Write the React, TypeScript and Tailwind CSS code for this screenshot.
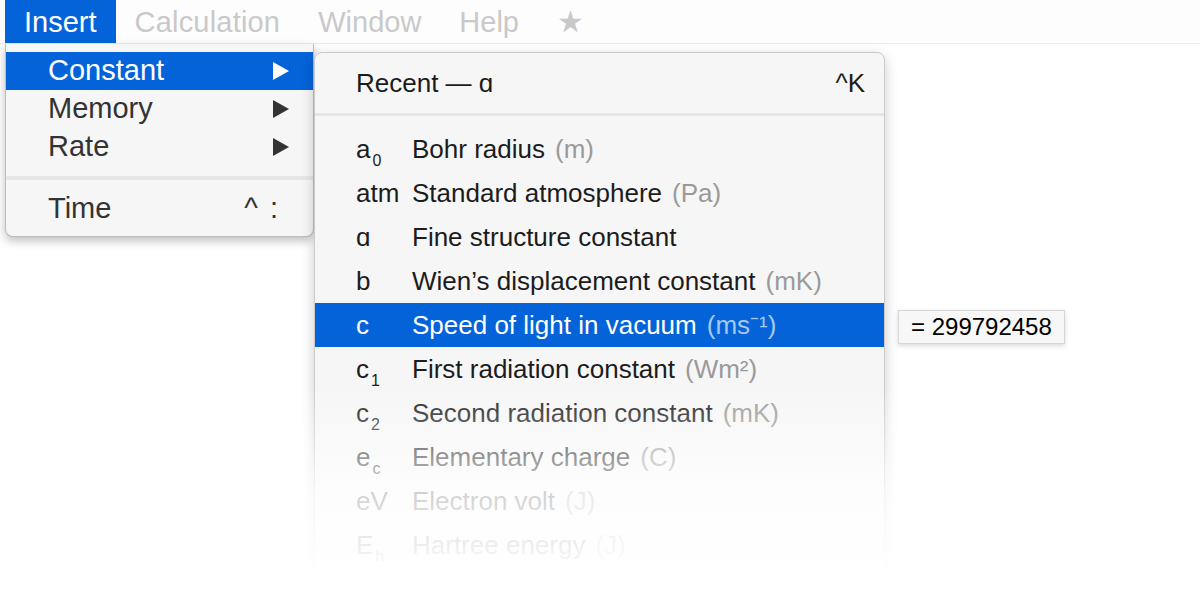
import React from "react";

type Row = {
  sym: React.ReactNode;
  name: string;
  unit?: string;
  active?: boolean;
};

const rows: Row[] = [
  { sym: <>a<sub className="text-[16px] ml-[2px] align-[-4px]">0</sub></>, name: "Bohr radius", unit: "(m)" },
  { sym: "atm", name: "Standard atmosphere", unit: "(Pa)" },
  { sym: "ɑ", name: "Fine structure constant" },
  { sym: "b", name: "Wien’s displacement constant", unit: "(mK)" },
  { sym: "c", name: "Speed of light in vacuum", unit: "(ms⁻¹)", active: true },
  { sym: <>c<sub className="text-[16px] ml-[2px] align-[-4px]">1</sub></>, name: "First radiation constant", unit: "(Wm²)" },
  { sym: <>c<sub className="text-[16px] ml-[2px] align-[-4px]">2</sub></>, name: "Second radiation constant", unit: "(mK)" },
  { sym: <>e<sub className="text-[16px] ml-[2px] align-[-4px]">c</sub></>, name: "Elementary charge", unit: "(C)" },
  { sym: "eV", name: "Electron volt", unit: "(J)" },
  { sym: <>E<sub className="text-[16px] ml-[2px] align-[-4px]">h</sub></>, name: "Hartree energy", unit: "(J)" },
];

function Arrow({ white }: { white?: boolean }) {
  return (
    <svg width="18" height="20" viewBox="0 0 18 20">
      <polygon points="1,1 17,10 1,19" fill={white ? "#ffffff" : "#333333"} />
    </svg>
  );
}

export default function App() {
  return (
    <div
      className="relative w-[1200px] h-[600px] overflow-hidden bg-white"
      style={{ fontFamily: '"Liberation Sans", Arial, sans-serif' }}
    >
      {/* menu bar */}
      <div className="flex h-[44px] pl-[5px] bg-[#fdfdfd] border-b border-[#ececec] text-[29px] text-[#c9c9c9]">
        <div className="flex items-center px-[19px] pt-[2px] bg-[#0463d9] text-white">Insert</div>
        <div className="flex items-center px-[19px] pt-[2px] tracking-[0.2px]">Calculation</div>
        <div className="flex items-center px-[19px] pt-[2px]">Window</div>
        <div className="flex items-center px-[19px] pt-[2px]">Help</div>
        <div className="flex items-center px-[19px] text-[30px]" style={{ fontFamily: '"DejaVu Sans", sans-serif' }}>★</div>
      </div>

      {/* insert menu */}
      <div className="absolute left-[5px] top-[44px] w-[309px] pt-[8px] pb-[8px] bg-[#f6f6f6] border border-t-0 border-[#bdbdbd] rounded-b-[8px] shadow-[0_4px_10px_rgba(0,0,0,0.25)] text-[29px] text-[#333]">
        <div className="flex items-center justify-between h-[38px] pl-[42px] pr-[23px] bg-[#0463d9] text-white">
          <span>Constant</span>
          <Arrow white />
        </div>
        <div className="flex items-center justify-between h-[38px] pl-[42px] pr-[23px]">
          <span>Memory</span>
          <Arrow />
        </div>
        <div className="flex items-center justify-between h-[38px] pl-[42px] pr-[23px]">
          <span>Rate</span>
          <Arrow />
        </div>
        <div className="h-[24px] flex items-center">
          <div className="w-full h-[4px] bg-[#e6e6e6]" />
        </div>
        <div className="flex items-center justify-between h-[38px] pl-[42px] pr-[35px]">
          <span>Time</span>
          <span className="tracking-[12px] -mr-[12px]">^:</span>
        </div>
      </div>

      {/* constant submenu */}
      <div className="absolute left-[314px] top-[52px] w-[571px] h-[560px] bg-[#f6f6f6] border border-[#cacaca] rounded-[8px] shadow-[0_4px_14px_rgba(0,0,0,0.2)] text-[26px] text-[#1c1c1c]">
        <div className="flex items-center justify-between h-[60px] pl-[41px] pr-[19px]">
          <span>Recent — ɑ</span>
          <span>^K</span>
        </div>
        <div className="h-[3px] bg-[#e6e6e6]" />
        <div className="pt-[11px]">
          {rows.map((r, i) => (
            <div
              key={i}
              className={
                "flex items-center h-[44px] pl-[41px] " +
                (r.active ? "bg-[#0463d9] text-white" : "")
              }
            >
              <span className="w-[56px] whitespace-nowrap">{r.sym}</span>
              <span className="whitespace-nowrap">{r.name}</span>
              {r.unit && (
                <span className={"ml-[10px] " + (r.active ? "text-[#a9c8f1]" : "text-[#9a9a9a]")}>
                  {r.unit}
                </span>
              )}
            </div>
          ))}
        </div>
      </div>

      {/* fade out at the bottom */}
      <div className="absolute left-[290px] top-[385px] w-[620px] h-[215px] bg-gradient-to-b from-white/0 via-white/80 to-white to-[90%]" />

      {/* value tooltip */}
      <div className="absolute left-[898px] top-[310px] h-[34px] px-[12px] flex items-center bg-[#f7f7f7] border border-[#d6d6d6] shadow-[0_2px_5px_rgba(0,0,0,0.15)] text-[24px] text-black">
        = 299792458
      </div>
    </div>
  );
}
